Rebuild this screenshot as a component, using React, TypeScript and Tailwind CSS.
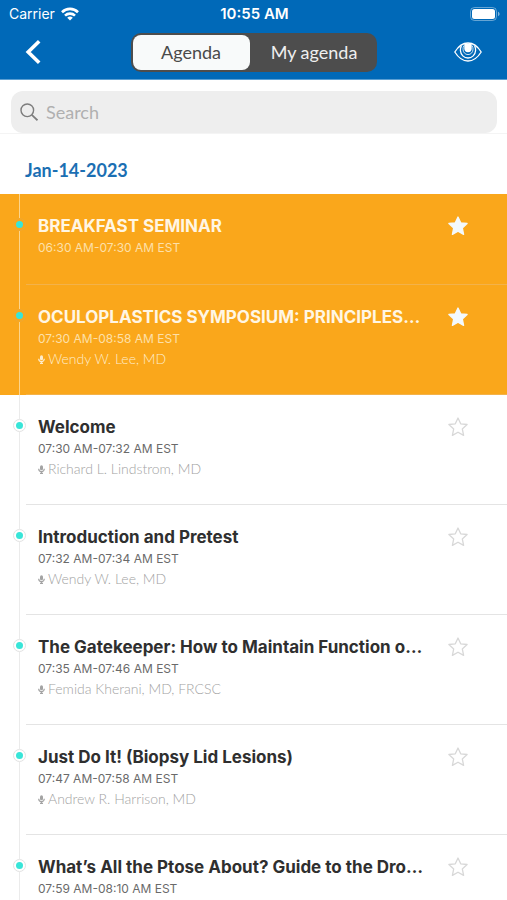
import React from 'react';

type Session = {
  title: string;
  time: string;
  speaker?: string;
  highlighted?: boolean;
};

const sessions: Session[] = [
  { title: 'BREAKFAST SEMINAR', time: '06:30 AM-07:30 AM EST', highlighted: true },
  {
    title: 'OCULOPLASTICS SYMPOSIUM: PRINCIPLES…',
    time: '07:30 AM-08:58 AM EST',
    speaker: 'Wendy W. Lee, MD',
    highlighted: true,
  },
  { title: 'Welcome', time: '07:30 AM-07:32 AM EST', speaker: 'Richard L. Lindstrom, MD' },
  { title: 'Introduction and Pretest', time: '07:32 AM-07:34 AM EST', speaker: 'Wendy W. Lee, MD' },
  {
    title: 'The Gatekeeper: How to Maintain Function o…',
    time: '07:35 AM-07:46 AM EST',
    speaker: 'Femida Kherani, MD, FRCSC',
  },
  { title: 'Just Do It! (Biopsy Lid Lesions)', time: '07:47 AM-07:58 AM EST', speaker: 'Andrew R. Harrison, MD' },
  { title: 'What’s All the Ptose About? Guide to the Dro…', time: '07:59 AM-08:10 AM EST' },
];

const WifiIcon = () => (
  <svg width="18" height="14" viewBox="0 0 18 14" fill="none" stroke="currentColor" strokeWidth="2.6">
    <path d="M1 5.2a11.4 11.4 0 0 1 16 0" />
    <path d="M4 8.6a7.2 7.2 0 0 1 10 0" />
    <path d="M9 13.6 6.2 10.8a4 4 0 0 1 5.6 0Z" fill="currentColor" stroke="none" />
  </svg>
);

const BatteryIcon = () => (
  <svg width="30" height="14" viewBox="0 0 30 14" fill="none">
    <rect x="0.5" y="0.5" width="26" height="13" rx="4" stroke="#fff" strokeOpacity="0.4" />
    <rect x="2" y="2" width="23" height="10" rx="2.5" fill="#fff" />
    <path d="M28 4.8v4.4c1-.4 1.6-1.2 1.6-2.2S29 5.2 28 4.8Z" fill="#fff" fillOpacity="0.5" />
  </svg>
);

const EyeIcon = () => (
  <svg width="28" height="20" viewBox="0 0 28 20" fill="none" stroke="#fff">
    <path d="M.8 10C4.5 4 9 1 14 1s9.5 3 13.2 9C23.5 16 19 19 14 19S4.500 16 .8 10Z" strokeWidth="1.3" />
    <path d="M7.400 4a8 8 0 0 0-1 4.500c.3 4.300 3.600 7.500 7.600 7.500s7.300-3.200 7.600-7.500a8 8 0 0 0-1-4.500" strokeWidth="1.3" />
    <path d="M10 3.500a6 6 0 0 0-1 3.700c0 3.200 2.200 5.400 5 5.400s5-2.200 5-5.400a6 6 0 0 0-1-3.700" strokeWidth="0.8" />
    <path d="M10.300 1.500h7.400V6.500a3.700 3.700 0 0 1-7.400 0Z" fill="#fff" stroke="none" />
  </svg>
);

const StarIcon = ({ filled }: { filled?: boolean }) => (
  <svg
    width="20"
    height="20"
    viewBox="0 0 20 20"
    strokeWidth="1.3"
    strokeLinejoin="round"
    className={filled ? 'fill-[#f3f9fd] stroke-[#f3f9fd]' : 'fill-none stroke-[#d8d8d8]'}
  >
    <path d="m10 1 2.700 5.800 6.400.7-4.800 4.400 1.300 6.500-5.600-3.200-5.600 3.200 1.300-6.500L.9 7.500l6.400-.7Z" />
  </svg>
);

const MicIcon = () => (
  <svg width="7" height="9" viewBox="0 0 7 9" fill="none">
    <rect x="2" y="0.300" width="3" height="5" rx="1.500" fill="currentColor" />
    <path d="M.7 3.800a2.800 2.800 0 0 0 5.600 0M3.500 6.600v1.800M2 8.400h3" stroke="currentColor" strokeWidth="1.200" />
  </svg>
);

const SessionRow = ({ session }: { session: Session }) => {
  const { title, time, speaker, highlighted } = session;
  return (
    <li className={highlighted ? 'flex bg-[#faa71b]' : 'flex bg-white'}>
      {/* Timeline */}
      <div className="ml-[13px] flex w-[13px] shrink-0 flex-col items-center">
        <span className={highlighted ? 'h-6 w-px bg-[#fcd48b]' : 'h-6 w-px bg-[#ebebeb]'} />
        <span
          className={
            highlighted
              ? 'flex size-[13px] items-center justify-center rounded-full border border-[#f0a832]'
              : 'flex size-[13px] items-center justify-center rounded-full border border-[#e2e2e2]'
          }
        >
          <span className="size-[7px] rounded-full bg-[#38e5d8]" />
        </span>
        <span className={highlighted ? 'w-px flex-1 bg-[#fcd48b]' : 'w-px flex-1 bg-[#ebebeb]'} />
      </div>

      {/* Session info */}
      <div
        className={
          highlighted
            ? 'flex min-h-[91px] min-w-0 flex-1 border-b border-[#f3b24a] pt-5 pb-[25px] pl-3'
            : 'flex min-h-[91px] min-w-0 flex-1 border-b border-[#e4e4e4] pt-5 pb-[25px] pl-3'
        }
      >
        <div className="min-w-0 flex-1">
          <h3
            className={
              highlighted
                ? 'truncate text-[17px] leading-6 font-bold text-[#fff6e4]'
                : 'truncate text-[17px] leading-6 font-bold text-[#2f2f2f]'
            }
          >
            {title}
          </h3>
          <p
            className={
              highlighted ? 'text-[12px] leading-5 text-[#fde0a9]' : 'text-[12px] leading-5 text-[#6a6a6a]'
            }
          >
            {time}
          </p>
          {speaker && (
            <p
              className={
                highlighted
                  ? 'flex items-center gap-[3px] font-[Lato] text-[14px] leading-5 font-light text-[#feeccb]'
                  : 'flex items-center gap-[3px] font-[Lato] text-[14px] leading-5 font-light text-[#a3a3a3]'
              }
            >
              <MicIcon />
              {speaker}
            </p>
          )}
        </div>
        <button type="button" aria-label="Favorite" className="mr-[39px] ml-3 h-6 shrink-0">
          <StarIcon filled={highlighted} />
        </button>
      </div>
    </li>
  );
};

const App: React.FC = () => {
  return (
    <div className="flex h-screen flex-col overflow-hidden bg-white font-[Inter,sans-serif]">
      <header className="shrink-0 border-b border-[#5a9fd3] bg-[#0069b8] text-white">
        {/* Status bar */}
        <div className="grid h-7 grid-cols-3 items-center pr-[7px] pl-[9px] text-[14px] leading-5">
          <div className="flex items-center gap-1.5">
            Carrier
            <WifiIcon />
          </div>
          <div className="text-center text-[15px] font-semibold">10:55 AM</div>
          <div className="flex justify-end">
            <BatteryIcon />
          </div>
        </div>

        {/* Nav bar */}
        <div className="grid h-[51px] grid-cols-[1fr_auto_1fr] items-center pb-[3px]">
          <button type="button" aria-label="Back" className="ml-[25px] w-4">
            <svg width="16" height="24" viewBox="0 0 16 24" fill="none" stroke="#fff" strokeWidth="3.6">
              <path d="M14.200 1.300 3.200 12l11 10.700" />
            </svg>
          </button>
          <div className="flex rounded-[10px] bg-[#4d4d4d] p-0.5 font-[Lato] text-[18px] leading-6">
            <button type="button" className="h-[35px] w-[117px] rounded-[8px] bg-[#f8fafa] text-[#4a4a4a]">
              Agenda
            </button>
            <button type="button" className="h-[35px] w-[125px] pl-1 text-[#efefef]">
              My agenda
            </button>
          </div>
          <button type="button" aria-label="Preview" className="mr-[25px] justify-self-end">
            <EyeIcon />
          </button>
        </div>
      </header>

      {/* Search */}
      <div className="shrink-0 border-b border-[#f4f4f4] pt-[11px] pr-[10px] pl-[11px]">
        <label className="flex h-[42px] items-center gap-2 rounded-[12px] bg-[#eeeeee] pl-[9px]">
          <svg width="18" height="18" viewBox="0 0 18 18" fill="none" stroke="#7d7d7d" strokeWidth="1.4">
            <circle cx="7.3" cy="7.3" r="6.3" />
            <path d="m11.8 11.8 5.700 5.500" strokeWidth="1.8" />
          </svg>
          <input
            type="text"
            aria-label="Search"
            placeholder="Search"
            className="min-w-0 flex-1 bg-transparent font-[Lato] text-[18px] leading-6 outline-none placeholder:text-[#b0b0b0]"
          />
        </label>
      </div>

      <main className="min-h-0 flex-1 overflow-y-auto [scrollbar-width:none]">
        <h2 className="flex h-[60px] items-center pt-3 pl-[25px] font-[Lato] text-[18px] leading-6 font-bold text-[#1b6fb3]">
          Jan-14-2023
        </h2>
        <ul>
          {sessions.map((session) => (
            <SessionRow key={session.title} session={session} />
          ))}
        </ul>
      </main>
    </div>
  );
};

export default App;
